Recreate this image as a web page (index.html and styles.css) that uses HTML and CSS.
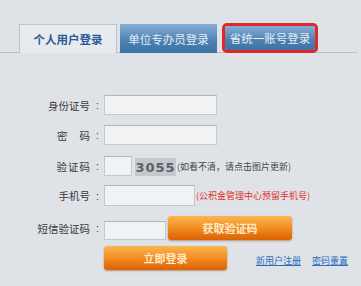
FILE: index.html
```html
<!DOCTYPE html>
<html lang="zh-CN">
<head>
<meta charset="utf-8">
<title>登录</title>
<link rel="stylesheet" href="styles.css">
</head>
<body>
<div class="tabs">
  <div class="tab tab-active">个人用户登录</div>
  <div class="tab tab-blue tab-second">单位专办员登录</div>
  <div class="tab-frame"><div class="tab tab-blue tab-inner">省统一账号登录</div></div>
</div>
<div class="form">
  <div class="row row1">
    <div class="lbl">身份证号<span class="colon">:</span></div>
    <input class="inp inp-long" type="text">
  </div>
  <div class="row row2">
    <div class="lbl"><span>密</span><span class="gap12"></span><span>码</span><span class="colon">:</span></div>
    <input class="inp inp-long" type="password">
  </div>
  <div class="row row3">
    <div class="lbl"><span class="spaced">验证码</span><span class="colon">:</span></div>
    <input class="inp inp-code" type="text">
    <div class="captcha">3055</div>
    <span class="hint">(如看不清，请点击图片更新)</span>
  </div>
  <div class="row row4">
    <div class="lbl">手机号<span class="colon">:</span></div>
    <input class="inp inp-phone" type="text">
    <span class="hint hint-red">(公积金管理中心预留手机号)</span>
  </div>
  <div class="row row5">
    <div class="lbl">短信验证码<span class="colon">:</span></div>
    <input class="inp inp-sms" type="text">
    <button class="btn btn-getcode">获取验证码</button>
  </div>
  <div class="row row6">
    <div class="lbl"></div>
    <button class="btn btn-login">立即登录</button>
    <a class="link link-reg" href="#">新用户注册</a>
    <a class="link link-reset" href="#">密码重置</a>
  </div>
</div>
</body>
</html>
```
FILE: styles.css
```css
html, body {
  margin: 0;
  padding: 0;
}
body {
  background: #dfe3e7;
  font-family: "Noto Sans CJK SC", "Noto Sans", sans-serif;
  color: #333;
  width: 361px;
  height: 286px;
  overflow: hidden;
}
.tabs {
  display: flex;
  align-items: flex-end;
  padding: 0 0 0 19px;
  height: 52px;
  border-bottom: 1px solid #b8c0c9;
  margin-right: 4px;
}
.tab {
  box-sizing: border-box;
  display: flex;
  align-items: center;
  justify-content: center;
  font-size: 11.5px;
  height: 29px;
  margin-bottom: -1px;
}
.tab-active {
  width: 98px;
  background: #e7eaee;
  border: 1px solid #bcc5ce;
  border-bottom: none;
  color: #2b5b94;
  font-weight: bold;
}
.tab-blue {
  background: linear-gradient(#86afd3, #4b80b0 60%, #3c73a5);
  color: #e6eef7;
}
.tab-second {
  width: 97px;
  margin-left: 3px;
}
.tab-frame {
  box-sizing: border-box;
  width: 96px;
  height: 30px;
  margin-left: 5px;
  margin-bottom: -1px;
  border: 3px solid #e0272a;
  border-radius: 5px;
  display: flex;
}
.tab-inner {
  flex: 1;
  height: auto;
  margin: 0;
  border-radius: 2px;
}
.form {
  padding-top: 42px;
}
.row {
  display: flex;
  align-items: center;
}
.row1 { height: 20px; }
.row2 { height: 20px; margin-top: 10px; }
.row3 { height: 20px; margin-top: 11px; }
.row4 { height: 21px; margin-top: 9px; }
.row5 { height: 24px; margin-top: 10px; }
.row6 { height: 24px; margin-top: 6px; }
.lbl {
  box-sizing: border-box;
  width: 104px;
  flex: none;
  display: flex;
  justify-content: flex-end;
  align-items: center;
  padding-right: 5px;
  font-size: 10.5px;
  color: #3a3a3a;
}
.colon {
  margin-left: 6px;
  font-family: "Liberation Sans", sans-serif;
}
.gap12 {
  display: inline-block;
  width: 12px;
}
.spaced {
  letter-spacing: 1px;
  margin-right: -1px;
}
.inp {
  box-sizing: border-box;
  height: 100%;
  margin: 0;
  padding: 0 3px;
  background: #f1f2f4;
  border: 1px solid #c3c8ce;
  border-top-color: #b0b6bd;
  outline: none;
  font-size: 11px;
}
.inp-long { width: 113px; }
.inp-code { width: 28px; }
.inp-phone { width: 91px; }
.inp-sms { width: 62px; height: 19px; align-self: flex-end; }
.captcha {
  box-sizing: border-box;
  width: 41px;
  height: 18px;
  margin-left: 3px;
  align-self: flex-end;
  background: #c5c8cc;
  color: #5c6066;
  font-family: "DejaVu Sans", sans-serif;
  font-weight: bold;
  font-size: 13px;
  letter-spacing: 1px;
  display: flex;
  align-items: center;
  justify-content: center;
}
.hint {
  font-size: 9px;
  color: #444;
  white-space: nowrap;
}
.row3 .hint { margin-left: 1px; }
.hint-red {
  color: #e2312c;
  margin-left: 1px;
}
.btn {
  box-sizing: border-box;
  height: 24px;
  border: none;
  border-radius: 3px;
  padding: 0;
  background: linear-gradient(#fbb550, #f39227 45%, #e8750f 75%, #d8620a);
  color: #fdebc9;
  font-family: "Noto Sans CJK SC", sans-serif;
  font-weight: bold;
  font-size: 11px;
  box-shadow: 0 1px 2px rgba(120, 60, 0, 0.45);
}
.btn-getcode {
  width: 124px;
  margin-left: 2px;
}
.btn-login {
  width: 123px;
}
.link {
  font-size: 9px;
  color: #2a6cc0;
  text-decoration: underline;
  align-self: flex-end;
  margin-bottom: 3px;
}
.link-reg { margin-left: 29px; }
.link-reset { margin-left: 11px; }
```
